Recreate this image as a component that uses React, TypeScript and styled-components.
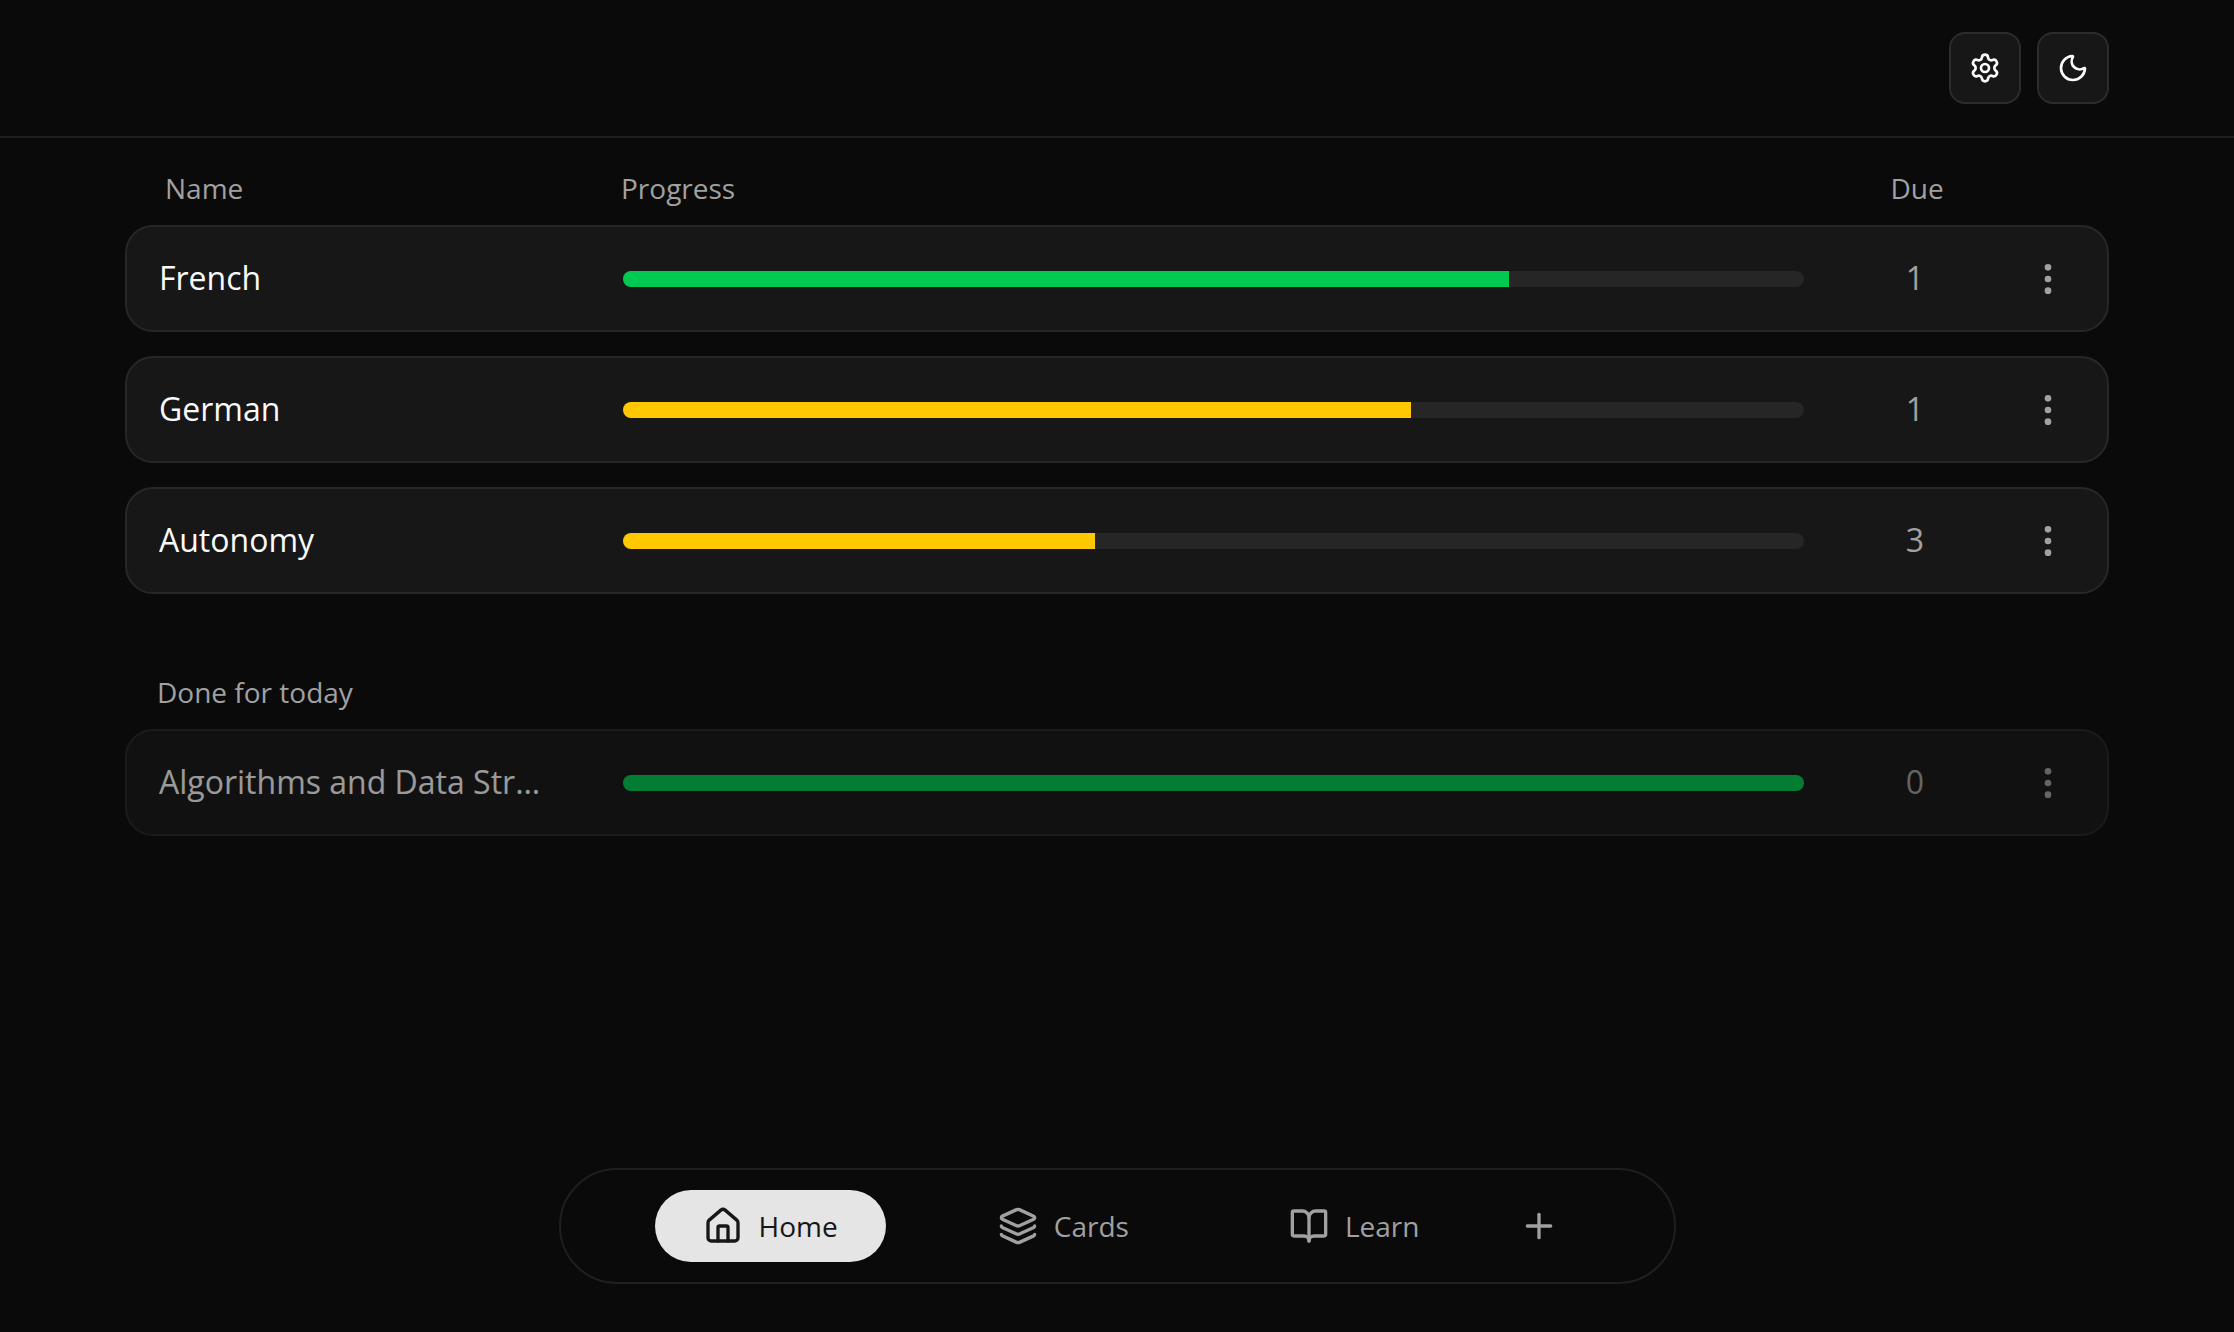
import React from "react";
import styled, { createGlobalStyle } from "styled-components";
import { BookOpen, EllipsisVertical, House, Layers, Moon, Plus, Settings } from "lucide-react";

const GlobalStyle = createGlobalStyle`
  *, *::before, *::after { box-sizing: border-box; }
  body {
    margin: 0;
    background: #0a0a0a;
    color: #fafafa;
    font-family: "Open Sans", "Noto Sans", sans-serif;
  }
  button { font: inherit; cursor: pointer; }
`;

const Page = styled.div`
  display: flex;
  flex-direction: column;
  min-height: 100vh;
`;

const Container = styled.div`
  width: 100%;
  max-width: 2048px;
  margin: 0 auto;
  padding: 0 32px;
`;

const Header = styled.header`
  padding: 32px 0;
  border-bottom: 2px solid #202020;
`;

const Toolbar = styled(Container)`
  display: flex;
  justify-content: flex-end;
  gap: 16px;
`;

const IconButton = styled.button`
  display: flex;
  align-items: center;
  justify-content: center;
  width: 72px;
  height: 72px;
  padding: 0;
  border: 2px solid #2c2c2c;
  border-radius: 16px;
  background: #171717;
  color: #fafafa;
`;

const Main = styled.main`
  flex: 1;
  padding-top: 22px;
`;

const DeckTable = styled.table`
  display: block;
`;

const TableHead = styled.thead`
  display: block;
`;

const HeadRow = styled.tr`
  display: grid;
  grid-template-columns: 456px minmax(0, 1fr) 222px 49px;
  padding: 8px 32px 17px 40px;
  color: #a1a1a1;
  font-size: 28px;
  line-height: 40px;
`;

const HeadCell = styled.th<{ $center?: boolean }>`
  padding: 0;
  font-weight: 400;
  text-align: ${(p) => (p.$center ? "center" : "left")};
`;

const DeckRows = styled.tbody`
  display: flex;
  flex-direction: column;
  gap: 24px;
`;

const DeckRow = styled.tr<{ $done?: boolean }>`
  display: grid;
  grid-template-columns: 464px minmax(0, 1fr) 222px 49px;
  align-items: center;
  padding: 24px 32px;
  border: 2px solid #272727;
  border-radius: 28px;
  background: #171717;
  opacity: ${(p) => (p.$done ? 0.6 : 1)};
`;

const Cell = styled.td`
  padding: 0;
`;

const DeckName = styled.th`
  overflow: hidden;
  padding: 0 64px 2px 0;
  font-size: 32px;
  font-weight: 400;
  line-height: 53px;
  text-align: left;
  text-overflow: ellipsis;
  white-space: nowrap;
`;

const Track = styled.div`
  overflow: hidden;
  height: 16px;
  border-radius: 8px;
  background: #262626;
`;

const Fill = styled.div<{ $color: string }>`
  height: 100%;
  background: ${(p) => p.$color};
`;

const DueCell = styled.td`
  padding: 0 0 2px;
  color: #a1a1a1;
  font-size: 32px;
  line-height: 53px;
  text-align: center;
`;

const MenuButton = styled.button`
  display: flex;
  padding: 2px;
  border: 0;
  background: none;
  color: #a1a1a1;
`;

const SectionTitle = styled.h2`
  margin: 0;
  padding: 78px 32px 17px;
  color: #a1a1a1;
  font-size: 28px;
  font-weight: 400;
  line-height: 40px;
`;

const BottomNav = styled.nav`
  display: flex;
  align-items: center;
  justify-content: center;
  gap: 32px;
  width: 50%;
  margin: 0 auto 48px;
  padding: 20px 0;
  border: 2px solid #1f1f1f;
  border-radius: 60px;
`;

const NavLinks = styled.div`
  display: flex;
  gap: 64px;
`;

const NavLink = styled.a<{ $active?: boolean }>`
  display: flex;
  align-items: center;
  gap: 16px;
  padding: 16px 48px;
  border-radius: 36px;
  background: ${(p) => (p.$active ? "#e5e5e5" : "transparent")};
  color: ${(p) => (p.$active ? "#171717" : "#a1a1a1")};
  font-size: 28px;
  line-height: 40px;
  text-decoration: none;
`;

const AddButton = styled.button`
  display: flex;
  padding: 16px 20px;
  border: 0;
  background: none;
  color: #a1a1a1;
`;

type Deck = { name: string; progress: number; due: number; color: string };

const green = "#00c951";
const yellow = "#ffc800";

const active: Deck[] = [
  { name: "French", progress: 75, due: 1, color: green },
  { name: "German", progress: 66.7, due: 1, color: yellow },
  { name: "Autonomy", progress: 40, due: 3, color: yellow },
];

const finished: Deck[] = [
  { name: "Algorithms and Data Structures", progress: 100, due: 0, color: green },
];

const maxNameLength = 24;

function shorten(name: string) {
  return name.length > maxNameLength ? `${name.slice(0, maxNameLength - 1)}…` : name;
}

function DeckItem({ deck, done }: { deck: Deck; done?: boolean }) {
  return (
    <DeckRow $done={done}>
      <DeckName scope="row">{shorten(deck.name)}</DeckName>
      <Cell>
        <Track role="progressbar" aria-valuenow={deck.progress} aria-valuemin={0} aria-valuemax={100}>
          <Fill $color={deck.color} style={{ width: `${deck.progress}%` }} />
        </Track>
      </Cell>
      <DueCell>{deck.due}</DueCell>
      <Cell>
        <MenuButton type="button" aria-label="Deck options">
          <EllipsisVertical size={40} />
        </MenuButton>
      </Cell>
    </DeckRow>
  );
}

export default function App() {
  return (
    <Page>
      <GlobalStyle />
      <Header>
        <Toolbar>
          <IconButton type="button" aria-label="Settings">
            <Settings size={32} />
          </IconButton>
          <IconButton type="button" aria-label="Toggle theme">
            <Moon size={32} />
          </IconButton>
        </Toolbar>
      </Header>
      <Main>
        <Container>
          <DeckTable>
            <TableHead>
              <HeadRow>
                <HeadCell scope="col">Name</HeadCell>
                <HeadCell scope="col">Progress</HeadCell>
                <HeadCell scope="col" $center>
                  Due
                </HeadCell>
              </HeadRow>
            </TableHead>
            <DeckRows>
              {active.map((deck) => (
                <DeckItem key={deck.name} deck={deck} />
              ))}
            </DeckRows>
          </DeckTable>
          <SectionTitle id="done-title">Done for today</SectionTitle>
          <DeckTable aria-labelledby="done-title">
            <DeckRows>
              {finished.map((deck) => (
                <DeckItem key={deck.name} deck={deck} done />
              ))}
            </DeckRows>
          </DeckTable>
        </Container>
      </Main>
      <BottomNav>
        <NavLinks>
          <NavLink href="#home" $active>
            <House size={40} />
            Home
          </NavLink>
          <NavLink href="#cards">
            <Layers size={40} />
            Cards
          </NavLink>
          <NavLink href="#learn">
            <BookOpen size={40} />
            Learn
          </NavLink>
        </NavLinks>
        <AddButton type="button" aria-label="Add">
          <Plus size={40} />
        </AddButton>
      </BottomNav>
    </Page>
  );
}
